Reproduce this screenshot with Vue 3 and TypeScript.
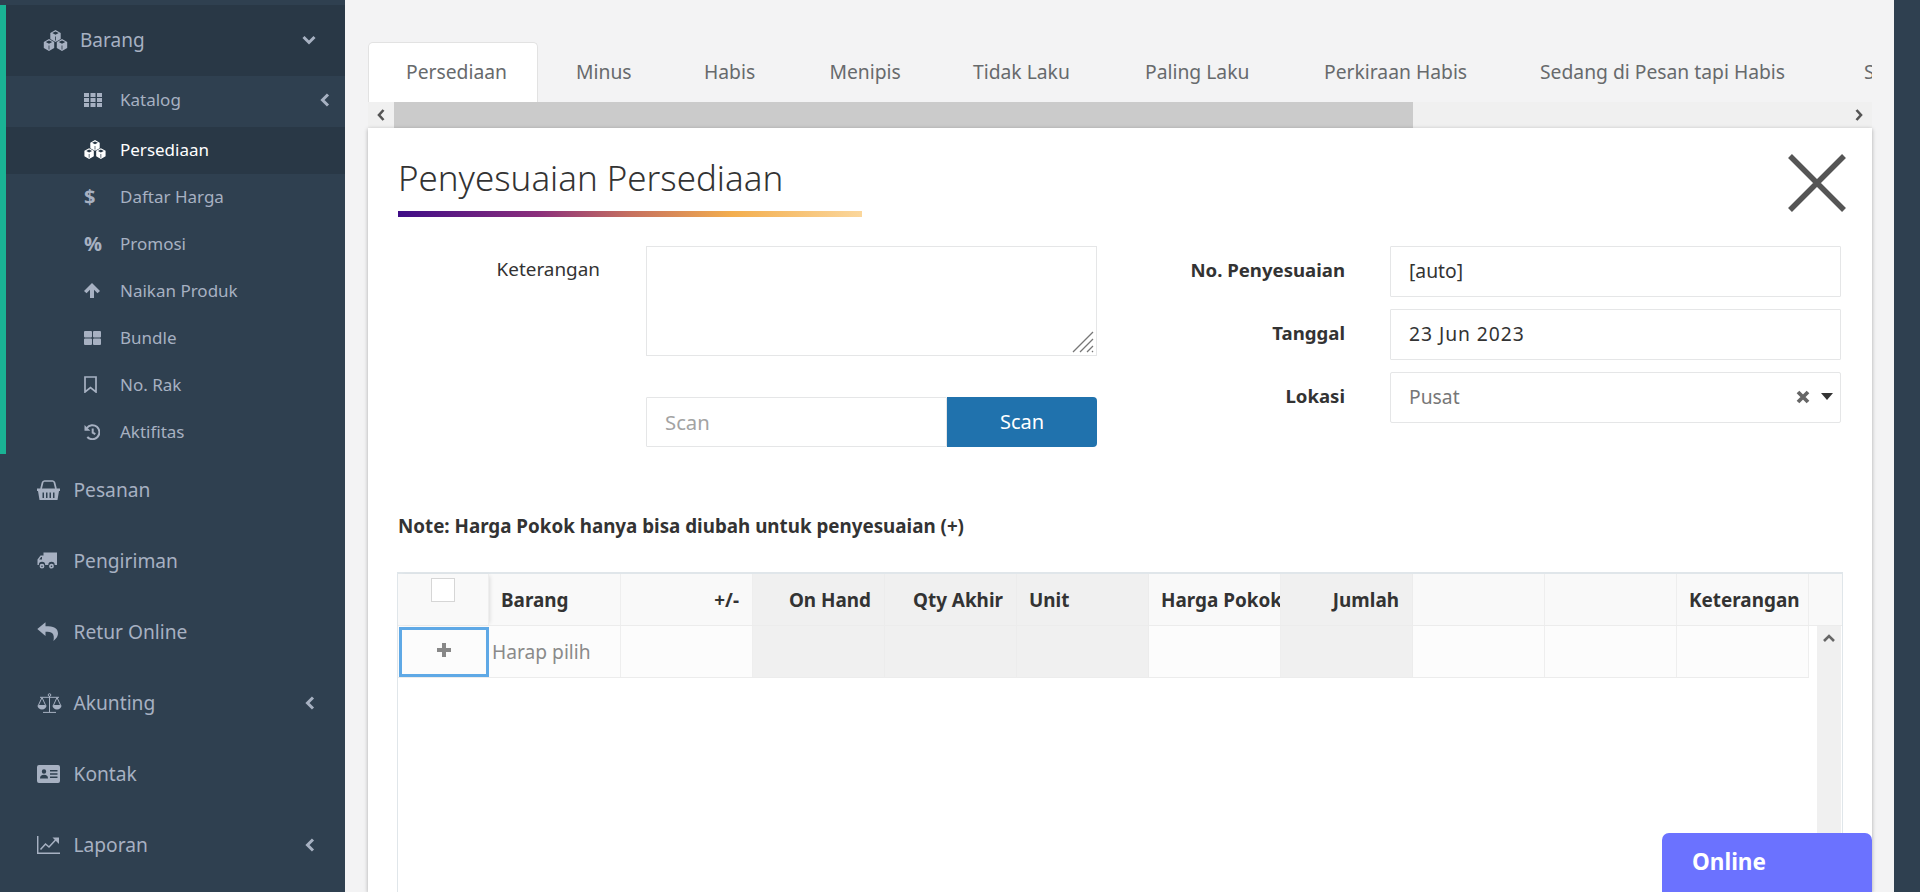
<script setup lang="ts">
interface Ico { w: number; h: number; f?: string; s?: string; sw?: number; t?: string }

function cube(cx: number, cy: number, r: number): string {
  const k = 0.866 * r
  const hex = `M${cx} ${cy - r}L${cx + k} ${cy - r / 2}V${cy + r / 2}L${cx} ${cy + r}L${cx - k} ${cy + r / 2}V${cy - r / 2}Z`
  const top = `M${cx} ${cy - r + 1.6}L${cx + k - 2} ${cy - r / 2 + 0.1}L${cx} ${cy - 1.2}L${cx - k + 2} ${cy - r / 2 + 0.1}Z`
  const slit = `M${cx - 0.4} ${cy + 0.6}h.8v${r - 2}h-.8z`
  return hex + top + slit
}
const cubes = cube(12, 6, 6) + cube(5.5, 15, 6) + cube(18.5, 15, 6)

const th = [0, 6.5, 13].flatMap((x) => [0, 5, 10].map((y) => `M${x} ${y}h5v4H${x}z`)).join('')
const thl = [0, 9].flatMap((x) => [0, 7.5].map((y) => `M${x + 1} ${y}h6a1 1 0 0 1 1 1v4.5a1 1 0 0 1-1 1h-6a1 1 0 0 1-1-1v-4.5a1 1 0 0 1 1-1z`)).join('')

const icons: Record<string, Ico> = {
  cubes: { w: 24, h: 21, f: cubes },
  th: { w: 18, h: 14, f: th },
  usd: { w: 12, h: 20, t: '$' },
  pct: { w: 16, h: 20, t: '%' },
  up: { w: 16, h: 15, f: 'M8 0L16 8L13.5 10.2L10 6.8V15H6V6.8L2.5 10.2L0 8Z' },
  thl: { w: 17, h: 14, f: thl },
  mark: { w: 13, h: 17, s: 'M1 1H12V16L6.5 11.5L1 16Z', sw: 1.7 },
  hist: { w: 16, h: 16, f: 'M0.5 1V6.8H6.3Z', s: 'M3.3 13A7 7 0 1 0 2.8 4M8.7 4.5V8.6L11.3 10.2', sw: 2 },
  basket: { w: 23, h: 20, f: 'M0 8.5H23V11H22L20.5 20H2.5L1 11H0ZM5.5 12.5V18H7V12.5ZM9 12.5V18H10.5V12.5ZM12.5 12.5V18H14V12.5ZM16 12.5V18H17.5V12.5Z', s: 'M4 9L5.5 2.8Q5.8 1 7.5 1H15.5Q17.2 1 17.5 2.8L19 9', sw: 1.7 },
  truck: { w: 20, h: 17, f: 'M6.5 .5H20V13H17.7A3.2 3.2 0 0 0 11.3 13H8.2A3.2 3.2 0 0 0 1.8 13H.5V7.5L3.5 3.5H6.5ZM5 5H4.1L2.2 7.5H5Z', s: 'M6.6 14.2A1.6 1.6 0 1 1 3.4 14.2A1.6 1.6 0 1 1 6.6 14.2ZM16.1 14.2A1.6 1.6 0 1 1 12.9 14.2A1.6 1.6 0 1 1 16.1 14.2Z', sw: 1.6 },
  reply: { w: 21, h: 19, f: 'M8.5 .3L.3 7L8.5 14V9.8C14.5 9.8 18 11 16.5 19C20 16 21 13.5 21 11.5C21 6 16.5 4.2 8.5 4.2Z' },
  scale: { w: 25, h: 20, f: 'M.5 12.5H9.5A4.5 4 0 0 1 .5 12.5ZM15.5 12.5H24.5A4.5 4 0 0 1 15.5 12.5Z', s: 'M12.5 3V19M6 19.4H19M3 4.3H22M5 4.5L1.3 12.5H8.7ZM20 4.5L16.3 12.5H23.7ZM13.8 2A1.3 1.3 0 1 1 11.2 2A1.3 1.3 0 1 1 13.8 2Z', sw: 1 },
  card: { w: 23, h: 18, f: 'M2 0H21A2 2 0 0 1 23 2V16A2 2 0 0 1 21 18H2A2 2 0 0 1 0 16V2A2 2 0 0 1 2 0ZM9.2 6.5A2.2 2.2 0 1 0 4.8 6.5A2.2 2.2 0 1 0 9.2 6.5ZM3 13.5H11Q11 9.8 7 9.8Q3 9.8 3 13.5ZM13 5V6.5H20.5V5ZM13 8.3V9.8H20.5V8.3ZM13 11.6V13.1H20.5V11.6Z' },
  chart: { w: 23, h: 18, f: 'M15.5 1.5H22V8Z', s: 'M.7 0V17.3H23M3.5 13.5L8.5 8L12 11L19 3.5', sw: 1.5 },
}

const subItems = [
  { label: 'Katalog', icon: 'th', arrow: true, cls: 'katalog' },
  { label: 'Persediaan', icon: 'cubes', cls: 'active' },
  { label: 'Daftar Harga', icon: 'usd' },
  { label: 'Promosi', icon: 'pct' },
  { label: 'Naikan Produk', icon: 'up' },
  { label: 'Bundle', icon: 'thl' },
  { label: 'No. Rak', icon: 'mark' },
  { label: 'Aktifitas', icon: 'hist' },
]
const mainItems = [
  { label: 'Pesanan', icon: 'basket' },
  { label: 'Pengiriman', icon: 'truck' },
  { label: 'Retur Online', icon: 'reply' },
  { label: 'Akunting', icon: 'scale', arrow: true },
  { label: 'Kontak', icon: 'card' },
  { label: 'Laporan', icon: 'chart', arrow: true },
]
const tabs = [
  { t: 'Persediaan', w: 170 },
  { t: 'Minus', w: 128 },
  { t: 'Habis', w: 125.5 },
  { t: 'Menipis', w: 143.5 },
  { t: 'Tidak Laku', w: 172 },
  { t: 'Paling Laku', w: 179 },
  { t: 'Perkiraan Habis', w: 216 },
  { t: 'Sedang di Pesan tapi Habis', w: 324 },
  { t: 'Segera Habis', w: 200 },
]
const cols = [
  { label: '+/-', cls: 'right' },
  { label: 'On Hand', cls: 'right gray' },
  { label: 'Qty Akhir', cls: 'right gray' },
  { label: 'Unit', cls: 'gray' },
  { label: 'Harga Pokok', cls: '' },
  { label: 'Jumlah', cls: 'right gray' },
  { label: '', cls: '' },
  { label: '', cls: '' },
  { label: 'Keterangan', cls: '' },
]
</script>

<template>
  <div class="page">
    <aside class="side">
      <div class="group">
        <div class="parent">
          <span class="ico-box">
            <svg :width="25" :height="21" :viewBox="`0 0 ${icons.cubes.w} ${icons.cubes.h}`"><path :d="icons.cubes.f" fill="currentColor" fill-rule="evenodd" /></svg>
          </span>
          <span>Barang</span>
          <svg class="chev-down" width="14" height="10" viewBox="0 0 14 10"><path d="M1.5 2L7 7.5L12.5 2" fill="none" stroke="currentColor" stroke-width="3" /></svg>
        </div>
        <div v-for="it in subItems" :key="it.label" class="sub" :class="it.cls">
          <span class="ico-box">
            <span v-if="icons[it.icon].t" class="glyph">{{ icons[it.icon].t }}</span>
            <svg v-else :width="it.icon === 'cubes' ? 22 : icons[it.icon].w" :height="it.icon === 'cubes' ? 19 : icons[it.icon].h" :viewBox="`0 0 ${icons[it.icon].w} ${icons[it.icon].h}`">
              <path v-if="icons[it.icon].f" :d="icons[it.icon].f" fill="currentColor" fill-rule="evenodd" />
              <path v-if="icons[it.icon].s" :d="icons[it.icon].s" fill="none" stroke="currentColor" :stroke-width="icons[it.icon].sw" />
            </svg>
          </span>
          <span>{{ it.label }}</span>
          <svg v-if="it.arrow" class="chev-left" width="10" height="14" viewBox="0 0 10 14"><path d="M8 1.5L2.5 7L8 12.5" fill="none" stroke="currentColor" stroke-width="3" /></svg>
        </div>
      </div>
      <div v-for="it in mainItems" :key="it.label" class="main-item">
        <span class="ico-box">
          <svg :width="icons[it.icon].w" :height="icons[it.icon].h" :viewBox="`0 0 ${icons[it.icon].w} ${icons[it.icon].h}`">
            <path v-if="icons[it.icon].f" :d="icons[it.icon].f" fill="currentColor" fill-rule="evenodd" />
            <path v-if="icons[it.icon].s" :d="icons[it.icon].s" fill="none" stroke="currentColor" :stroke-width="icons[it.icon].sw" />
          </svg>
        </span>
        <span>{{ it.label }}</span>
        <svg v-if="it.arrow" class="chev-left" width="10" height="14" viewBox="0 0 10 14"><path d="M8 1.5L2.5 7L8 12.5" fill="none" stroke="currentColor" stroke-width="3" /></svg>
      </div>
    </aside>

    <main class="content">
      <nav class="tabs">
        <a v-for="(t, i) in tabs" :key="t.t" class="tab" :class="{ on: i === 0 }" :style="{ width: t.w + 'px' }">{{ t.t }}</a>
      </nav>
      <div class="hbar">
        <span class="hbtn"><svg width="12" height="14" viewBox="0 0 12 14"><path d="M8.5 2L4 7L8.5 12" fill="none" stroke="#555" stroke-width="2.6" /></svg></span>
        <span class="thumb"></span>
        <span class="hbtn end"><svg width="12" height="14" viewBox="0 0 12 14"><path d="M3.5 2L8 7L3.5 12" fill="none" stroke="#555" stroke-width="2.6" /></svg></span>
      </div>

      <section class="panel">
        <header class="head">
          <div>
            <h1 class="title">Penyesuaian Persediaan</h1>
            <div class="grad"></div>
          </div>
          <svg class="close" width="58" height="58" viewBox="0 0 58 58"><path d="M2 2L56 56M56 2L2 56" stroke="#555" stroke-width="5.5" /></svg>
        </header>

        <div class="form">
          <div class="fcol left">
            <div class="row">
              <label class="lab light">Keterangan</label>
              <div class="ta">
                <svg class="grip" width="22" height="22" viewBox="0 0 22 22"><path d="M1 21L21 1M8 21L21 8M15 21L21 15M20 21L21 20" stroke="#777" stroke-width="1.3" /></svg>
              </div>
            </div>
            <div class="row scanrow">
              <span class="lab"></span>
              <div class="scan">
                <input class="inp" placeholder="Scan" />
                <button class="btn">Scan</button>
              </div>
            </div>
          </div>
          <div class="fcol rightc">
            <div class="row r2"><label class="lab">No. Penyesuaian</label><input class="inp box" value="[auto]" /></div>
            <div class="row r2"><label class="lab">Tanggal</label><input class="inp box date" value="23 Jun 2023" /></div>
            <div class="row r2">
              <label class="lab">Lokasi</label>
              <div class="select">
                <span class="pusat">Pusat</span>
                <svg width="14" height="14" viewBox="0 0 14 14"><path d="M2 2L12 12M12 2L2 12" stroke="#666" stroke-width="3.8" /></svg>
                <svg width="12" height="7" viewBox="0 0 12 7"><path d="M0 0H12L6 7Z" fill="#333" /></svg>
              </div>
            </div>
          </div>
        </div>

        <p class="note">Note: Harga Pokok hanya bisa diubah untuk penyesuaian (+)</p>

        <div class="table">
          <div class="thead">
            <div class="cell first"><span class="check"></span></div>
            <div class="cell hd barang">Barang</div>
            <div v-for="(c, i) in cols" :key="i" class="cell hd" :class="c.cls"><span class="clip">{{ c.label }}</span></div>
            <div class="cell filler"></div>
          </div>
          <div class="tbody">
            <div class="cell plus"><svg width="16" height="16" viewBox="0 0 16 16"><path d="M8 1V15M1 8H15" stroke="#888" stroke-width="4" /></svg></div>
            <div class="cell pick">Harap pilih</div>
            <div v-for="(c, i) in cols" :key="i" class="cell" :class="c.cls"></div>
          </div>
          <div class="vbar"><svg width="14" height="10" viewBox="0 0 14 10"><path d="M2 8L7 3L12 8" fill="none" stroke="#666" stroke-width="2.6" /></svg></div>
        </div>
      </section>
      <div class="online">Online</div>
    </main>
    <div class="rail"></div>
  </div>
</template>

<style>
html, body { margin: 0; padding: 0; height: 100%; overflow: hidden; }
</style>

<style scoped>
.page {
  display: flex;
  height: 892px;
  overflow: hidden;
  background: #f3f3f4;
  font-family: "Noto Sans", "Liberation Sans", sans-serif;
  color: #333;
}
.side { width: 345px; flex: none; background: #2f4050; color: #a7b1c2; padding-top: 5px; box-sizing: border-box; }
.ico-box { display: inline-flex; align-items: center; flex: none; }
.group { border-left: 6px solid #1ab394; height: 449px; box-sizing: border-box; }
.parent { display: flex; align-items: center; height: 71px; box-sizing: border-box; padding-bottom: 1px; background: #293846; padding-left: 37px; padding-right: 29px; font-size: 19px; }
.parent .ico-box { width: 37px; }
.chev-down, .chev-left { margin-left: auto; }
.sub { display: flex; align-items: center; height: 47px; box-sizing: border-box; padding-bottom: 2px; padding-left: 78px; padding-right: 15px; font-size: 17px; }
.sub .ico-box { width: 36px; }
.sub.katalog { height: 51px; padding-bottom: 4px; background: #2f4050; }
.sub.active { background: #293846; color: #fff; }
.glyph { font-family: "Open Sans", sans-serif; font-weight: 700; font-size: 20px; line-height: 20px; }
.main-item { display: flex; align-items: center; height: 71px; padding-left: 37px; padding-right: 30px; font-size: 19.2px; }
.main-item .ico-box { width: 36.5px; }

.content { flex: 1; min-width: 0; padding: 42px 22px 0 23px; display: flex; flex-direction: column; position: relative; }
.tabs { display: flex; height: 60px; overflow: hidden; flex: none; }
.tab { flex: none; box-sizing: border-box; height: 60px; line-height: 58px; padding-left: 37px; white-space: nowrap; font-size: 19.3px; color: #676a6c; border: 1px solid transparent; border-bottom: 0; }
.tab.on { background: #fff; border-color: #e2e2e2; border-radius: 5px 5px 0 0; }
.hbar { display: flex; height: 26px; flex: none; background: #f0f0f0; }
.hbtn { width: 26px; display: flex; align-items: center; justify-content: center; flex: none; }
.hbtn.end { margin-left: auto; }
.thumb { width: 1019px; background: #cbcbcb; }

.panel { flex: 1; min-height: 0; background: #fff; box-shadow: 0 1px 4px rgba(0, 0, 0, .3); padding: 26px 29px 0 30px; display: flex; flex-direction: column; }
.head { display: flex; justify-content: space-between; align-items: flex-start; height: 63px; flex: none; }
.close { margin-right: -3px; }
.title { margin: 0; height: 48px; line-height: 48px; font-size: 34.9px; font-weight: 300; color: #333; white-space: nowrap; }
.grad { margin-top: 9px; width: 464px; height: 6px; background: linear-gradient(90deg, #3f0d87 0%, #8b2f7c 30%, #c6705f 50%, #f3ae4e 72%, #fbd79c 100%); }

.form { display: flex; margin-top: 29px; flex: none; height: 201px; }
.fcol { display: flex; flex-direction: column; }
.fcol.left { width: 699px; gap: 41px; }
.fcol.rightc { margin-left: 33px; gap: 12px; }
.row { display: flex; gap: 46px; align-items: flex-start; }
.lab { width: 202px; flex: none; text-align: right; font-size: 18.6px; line-height: 47px; font-weight: 700; color: #333; }
.lab.light { font-weight: 400; font-size: 18.9px; }
.r2 .lab { width: 215px; }
.r2 { gap: 45px; }
.r2 .box, .select { width: 451px; }
.ta { position: relative; width: 451px; height: 110px; box-sizing: border-box; border: 1px solid #e5e6e7; }
.grip { position: absolute; right: 2px; bottom: 2px; }
.scan { display: flex; width: 451px; height: 50px; }
.inp { box-sizing: border-box; flex: 1; min-width: 0; height: 51px; border: 1px solid #e5e6e7; padding: 0 18px 2px; font: 400 19.3px "Noto Sans", sans-serif; color: #333; outline: none; border-radius: 1px; }
.date { letter-spacing: .95px; }
.scan .inp { height: 50px; font-size: 20.3px; padding-bottom: 0; }
.inp::placeholder { color: #a3a3a3; opacity: 1; }
.box { flex: none; }
.btn { width: 150px; flex: none; border: 0; background: #2072ad; color: #fff; font: 400 20px "Noto Sans", sans-serif; padding-bottom: 2px; border-radius: 0 4px 4px 0; }
.select { box-sizing: border-box; height: 51px; display: flex; align-items: center; gap: 11px; border: 1px solid #e5e6e7; border-radius: 2px; padding: 0 7px 2px 18px; font-size: 19.3px; color: #777; }
.pusat { margin-right: auto; }

.note { margin: 68px 0 33px; height: 24px; line-height: 22px; font-size: 18.8px; font-weight: 700; color: #333; flex: none; white-space: nowrap; }

.table { position: relative; flex: 1; min-height: 0; border: 1px solid #e0e6ea; border-top-width: 2px; border-bottom: 0; margin-left: -1px; }
.thead { display: grid; grid-template-columns: 91px repeat(10, 132px) 1fr; height: 52px; background: #f9f9f9; border-bottom: 1px solid #ececec; box-sizing: border-box; }
.tbody { display: grid; grid-template-columns: 91px repeat(10, 132px); width: 1411px; height: 52px; background: #fcfcfc; border-bottom: 1px solid #ececec; box-sizing: border-box; }
.cell { box-sizing: border-box; border-right: 1px solid #eee; min-width: 0; }
.cell.gray { background: #f0f0f0; border-right-color: #ececec; }
.first { display: flex; justify-content: center; padding-top: 4px; box-shadow: 3px 0 4px -2px rgba(0, 0, 0, .12); position: relative; }
.check { width: 24px; height: 24px; box-sizing: border-box; background: #fff; border: 1px solid #d6d6d6; }
.hd { display: flex; align-items: center; padding: 0 0 0 12px; font-size: 18.9px; font-weight: 700; color: #333; overflow: hidden; white-space: nowrap; }
.hd.barang { padding-left: 12px; }
.hd.right { justify-content: flex-end; padding-right: 13px; padding-left: 0; }
.filler { border-right: 0; }
.plus { display: flex; align-items: center; justify-content: center; border: 3px solid #5fa9e6; margin-top: 1px; padding-bottom: 4px; margin-left: 1px; }
.pick { display: flex; align-items: center; padding-left: 3px; font-size: 19.2px; color: #8a8a8a; white-space: nowrap; }
.vbar { position: absolute; top: 52px; right: 1px; bottom: 0; width: 24px; background: #f0f0f0; display: flex; justify-content: center; padding-top: 7px; box-sizing: border-box; }
.online { position: absolute; right: 22px; bottom: 0; box-sizing: border-box; width: 210px; height: 59px; padding-left: 30px; line-height: 58px; background: #6b72ff; color: #fff; font-size: 22.5px; font-weight: 700; border-radius: 7px 7px 0 0; }
.rail { width: 26px; flex: none; background: #2f4050; }
</style>
